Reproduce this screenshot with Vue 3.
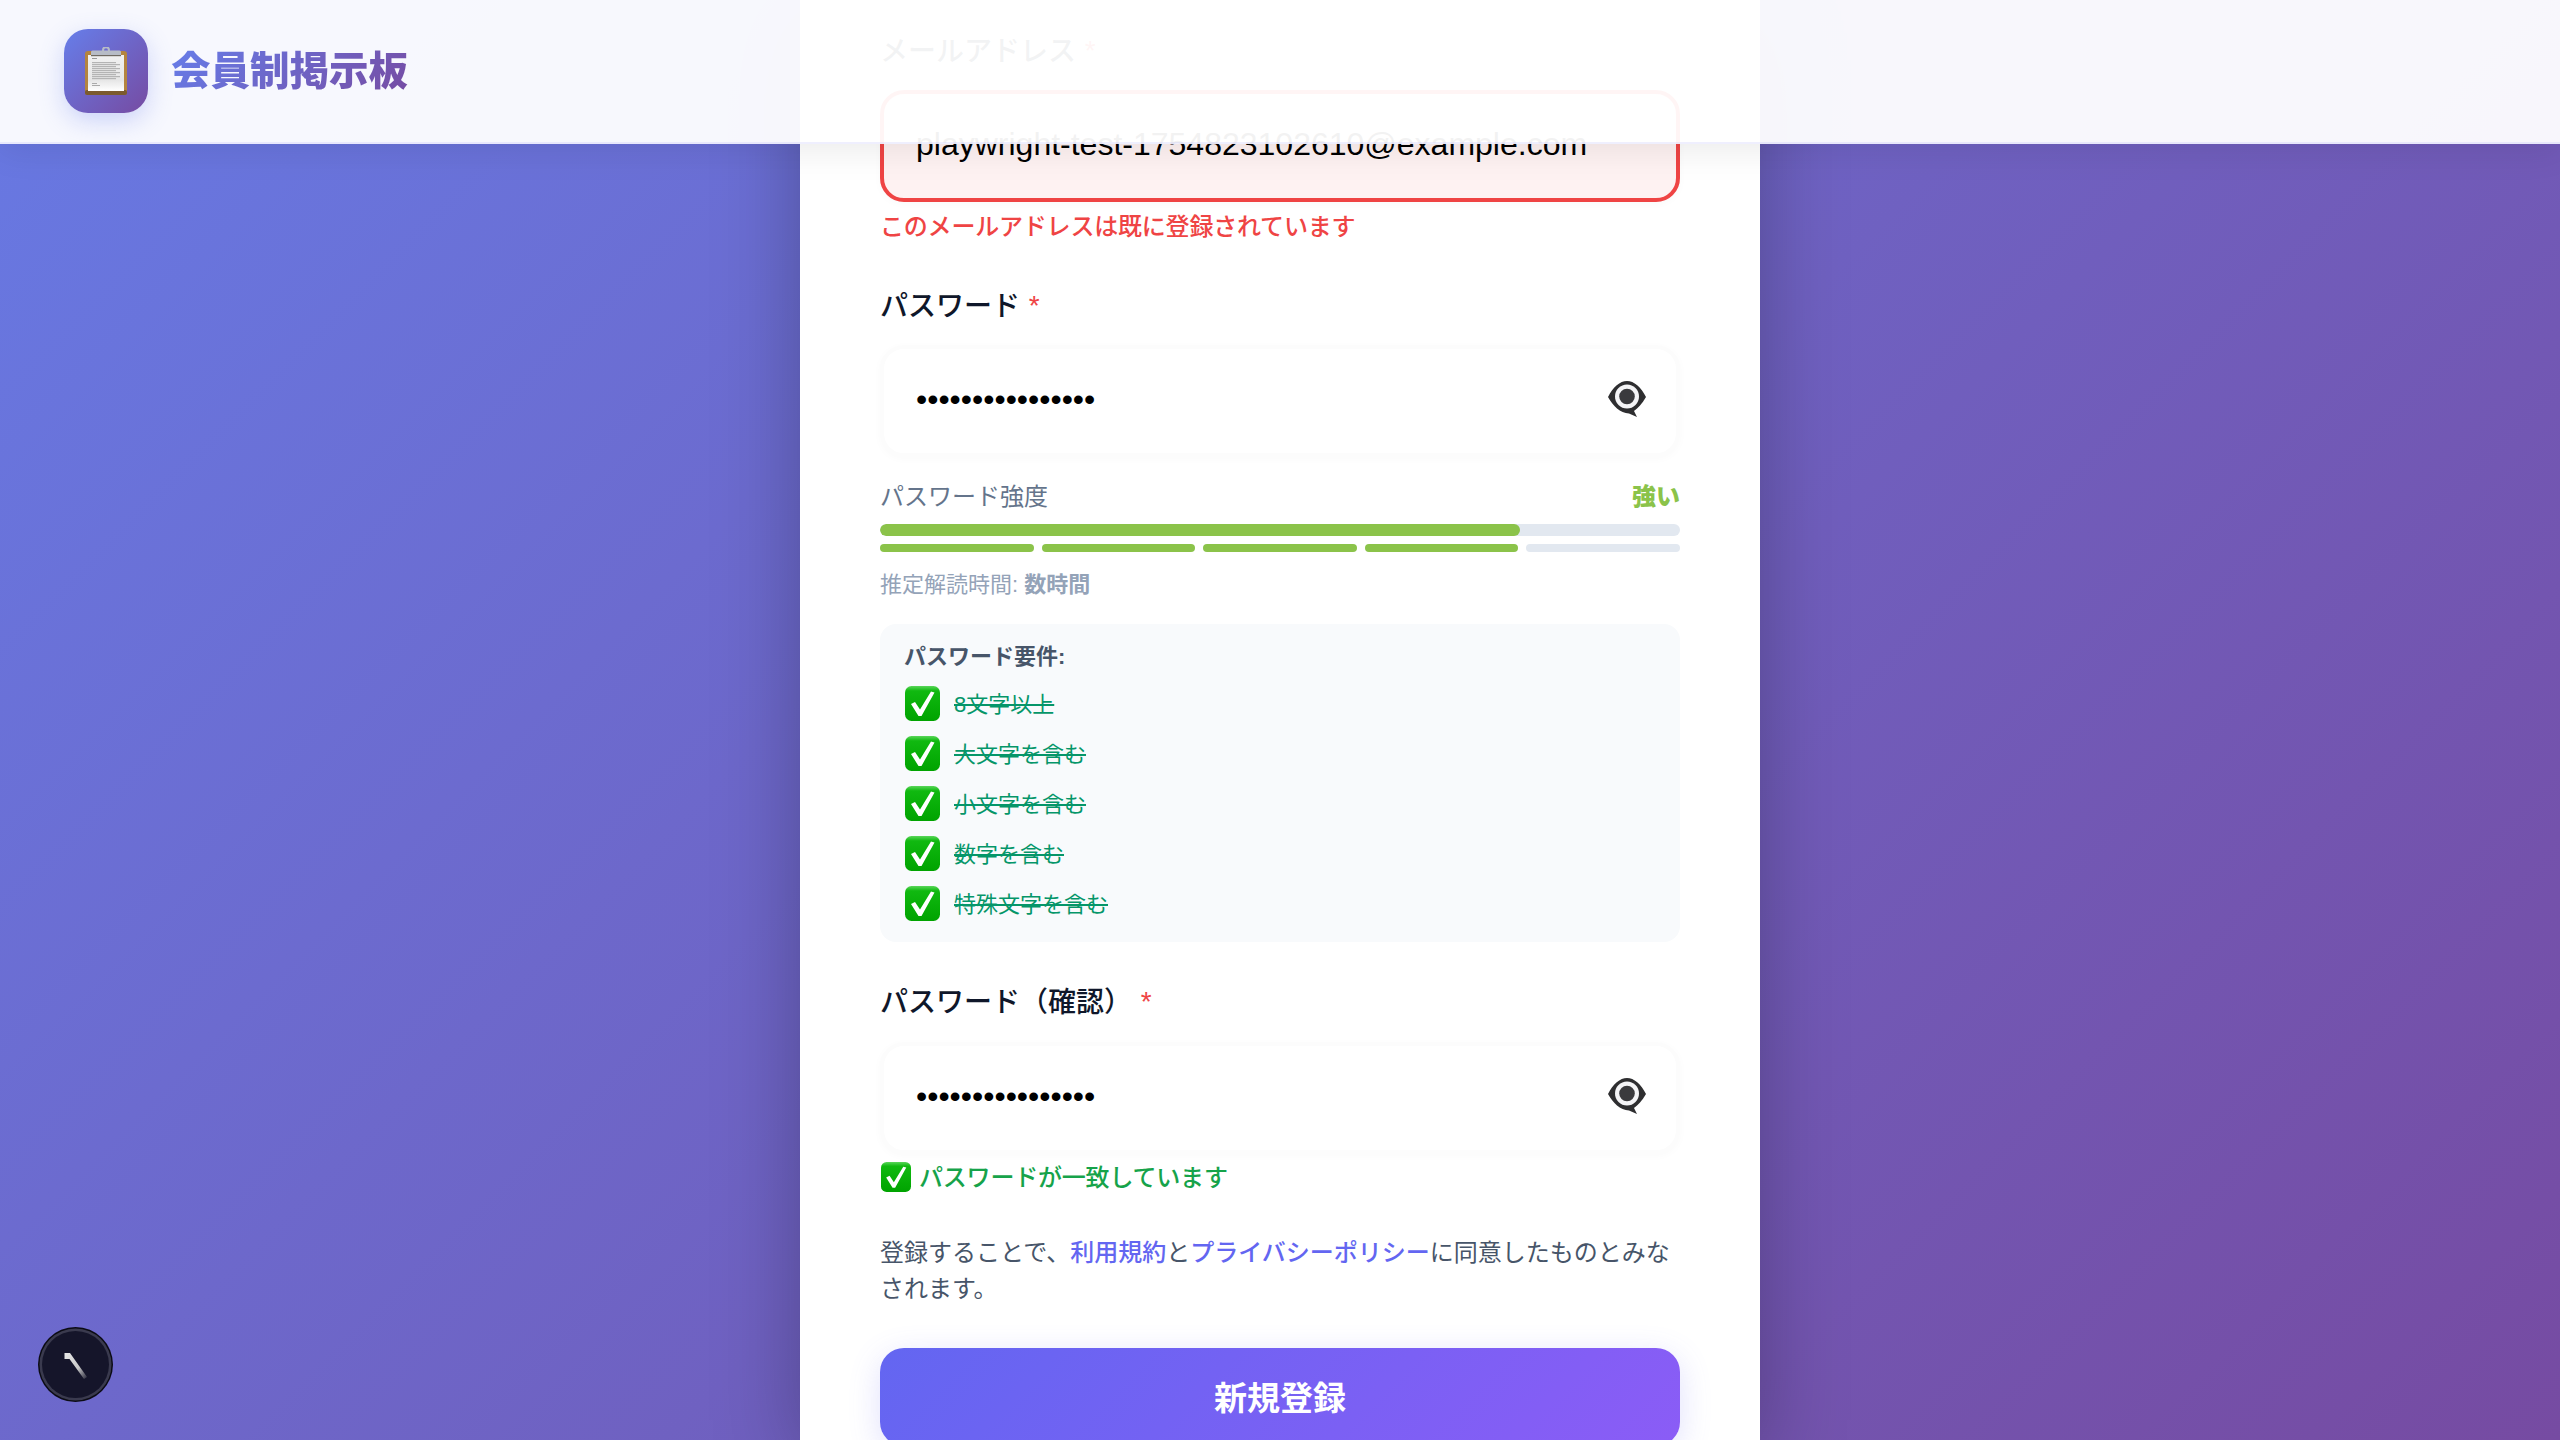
<script setup>
const requirements = ['8文字以上', '大文字を含む', '小文字を含む', '数字を含む', '特殊文字を含む']
const segments = [true, true, true, true, false]
const paperLines = [13, 15, 17, 19, 21, 23, 25, 27, 29]
</script>

<template>
  <div class="page">
    <header class="topbar">
      <div class="logo">
        <svg class="clip-icon" width="42" height="48" viewBox="0 0 42 48">
          <defs>
            <linearGradient id="paper" x1="0" y1="0" x2="0" y2="1">
              <stop offset="0" stop-color="#f1f1f1" />
              <stop offset="0.7" stop-color="#e6e6e6" />
              <stop offset="1" stop-color="#ffffff" />
            </linearGradient>
          </defs>
          <rect x="0" y="4" width="42" height="44" rx="3" fill="#b4843f" />
          <rect x="0" y="43" width="42" height="5" rx="2" fill="#7b5a2e" />
          <rect x="3" y="8" width="36" height="36" fill="url(#paper)" />
          <rect x="7" y="11" width="5" height="1" fill="#999" />
          <rect v-for="y in paperLines" :key="y" x="7" :y="y + 2" :width="y % 4 === 1 ? 24 : 28" height="1.2" fill="#b4b4b4" />
          <rect x="7" y="36" width="5" height="1" fill="#aaa" />
          <rect x="7" y="38" width="8" height="1" fill="#aaa" />
          <rect x="6" y="3.5" width="30" height="5.5" rx="1.5" fill="#b7bcc6" />
          <rect x="6" y="8" width="30" height="1.2" fill="#6f6a62" />
          <circle cx="21" cy="3.2" r="3" fill="none" stroke="#b7bcc6" stroke-width="2" />
        </svg>
      </div>
      <h1 class="brand">会員制掲示板</h1>
    </header>

    <main class="card">
      <section class="field">
        <label class="label">メールアドレス <span class="req">*</span></label>
        <input class="input input-error" type="email" value="playwright-test-1754823102610@example.com" readonly />
        <p class="error">このメールアドレスは既に登録されています</p>
      </section>

      <section class="field field-password">
        <label class="label">パスワード <span class="req">*</span></label>
        <div class="input-wrap">
          <input class="input" type="password" value="Playwright#Test1" readonly />
          <svg class="eye" width="40" height="38" viewBox="0 0 40 38">
            <path d="M1 17C6 7 13 1 20 1C27 1 34 7 39 17C35 24 31 28 27 31L30 37L22 33.5C13 33 6 26 1 17Z" fill="#2e2e30" />
            <circle cx="20" cy="16.5" r="12" fill="#f4f4f6" />
            <circle cx="20" cy="16.5" r="7.8" fill="#3a3a3d" />
          </svg>
        </div>

        <div class="strength-head">
          <span class="strength-title">パスワード強度</span>
          <span class="strength-value">強い</span>
        </div>
        <div class="bar"><div class="bar-fill" :style="{ width: '80%' }"></div></div>
        <div class="segments">
          <span v-for="(on, i) in segments" :key="i" class="segment" :class="{ on }"></span>
        </div>
        <p class="crack">推定解読時間: <strong>数時間</strong></p>

        <div class="reqs">
          <p class="reqs-title">パスワード要件:</p>
          <ul class="reqs-list">
            <li v-for="r in requirements" :key="r" class="reqs-item">
              <svg class="check" width="35" height="35" viewBox="0 0 35 35">
                <defs>
                  <linearGradient id="green" x1="0" y1="0" x2="0" y2="1">
                    <stop offset="0" stop-color="#5ad65a" />
                    <stop offset="0.14" stop-color="#10b910" />
                    <stop offset="1" stop-color="#00a300" />
                  </linearGradient>
                </defs>
                <rect width="35" height="35" rx="6.5" fill="url(#green)" />
                <path d="M6 18L10 16L15 23.5L26 5.5L29.5 6.5L16.5 30H13.5Z" fill="#fff" />
              </svg>
              <span class="reqs-text">{{ r }}</span>
            </li>
          </ul>
        </div>
      </section>

      <section class="field field-confirm">
        <label class="label">パスワード（確認） <span class="req">*</span></label>
        <div class="input-wrap">
          <input class="input" type="password" value="Playwright#Test1" readonly />
          <svg class="eye" width="40" height="38" viewBox="0 0 40 38">
            <path d="M1 17C6 7 13 1 20 1C27 1 34 7 39 17C35 24 31 28 27 31L30 37L22 33.5C13 33 6 26 1 17Z" fill="#2e2e30" />
            <circle cx="20" cy="16.5" r="12" fill="#f4f4f6" />
            <circle cx="20" cy="16.5" r="7.8" fill="#3a3a3d" />
          </svg>
        </div>
        <p class="match">
          <svg class="check" width="30" height="30" viewBox="0 0 35 35">
            <rect width="35" height="35" rx="6.5" fill="url(#green)" />
            <path d="M6 18L10 16L15 23.5L26 5.5L29.5 6.5L16.5 30H13.5Z" fill="#fff" />
          </svg>
          <span class="match-text">パスワードが一致しています</span>
        </p>
      </section>

      <p class="terms">
        登録することで、<a class="link">利用規約</a>と<a class="link">プライバシーポリシー</a>に同意したものとみなされます。
      </p>

      <button class="submit" type="button">新規登録</button>
    </main>

    <div class="dev-badge">
      <svg width="75" height="75" viewBox="0 0 75 75">
        <defs>
          <linearGradient id="stroke" x1="0" y1="0" x2="1" y2="1">
            <stop offset="0" stop-color="#e8e8e8" />
            <stop offset="0.6" stop-color="#c8c8c8" />
            <stop offset="1" stop-color="#c8c8c8" stop-opacity="0.1" />
          </linearGradient>
        </defs>
        <circle cx="37.5" cy="37.5" r="37.5" fill="#0b0b14" />
        <circle cx="37.5" cy="37.5" r="36" fill="#3a3a4e" />
        <circle cx="37.5" cy="37.5" r="33.5" fill="#15152a" />
        <path d="M26.5 26H32L49 50L46 52L31.5 32H26.5Z" fill="url(#stroke)" />
      </svg>
    </div>
  </div>
</template>

<style>
html,
body {
  margin: 0;
  overflow: hidden;
}
</style>

<style scoped>
.page {
  height: 1440px;
  overflow: hidden;
  background: linear-gradient(135deg, #667eea 0%, #764ba2 100%) bottom / 100% 1840px no-repeat;
  font-family: "Liberation Sans", "Noto Sans CJK JP", sans-serif;
  color: #0f172a;
}

.topbar {
  position: fixed;
  top: 0;
  left: 0;
  right: 0;
  z-index: 10;
  height: 144px;
  box-sizing: border-box;
  display: flex;
  align-items: center;
  gap: 23px;
  padding: 0 64px;
  background: rgba(255, 255, 255, 0.95);
  border-bottom: 2px solid rgba(99, 102, 241, 0.1);
  box-shadow: 0 8px 32px rgba(0, 0, 0, 0.08);
}

.logo {
  width: 84px;
  height: 84px;
  border-radius: 24px;
  background: linear-gradient(135deg, #667eea, #764ba2);
  box-shadow: 0 8px 24px rgba(102, 126, 234, 0.3);
  display: flex;
  align-items: center;
  justify-content: center;
}

.brand {
  margin: 0;
  font-size: 39.5px;
  line-height: 56px;
  font-weight: 900;
  background: linear-gradient(135deg, #667eea, #764ba2);
  -webkit-background-clip: text;
  background-clip: text;
  color: transparent;
}

.card {
  width: 960px;
  height: 1440px;
  box-sizing: border-box;
  margin: 0 auto;
  padding: 32px 80px 0;
  background: #fff;
  box-shadow: 0 20px 80px rgba(0, 0, 0, 0.28);
}

.field-password {
  margin-top: 43px;
}

.field-confirm {
  margin-top: 41px;
}

.label {
  display: block;
  font-size: 28px;
  line-height: 40px;
  font-weight: 500;
  margin-bottom: 18px;
  color: #0f172a;
}

.field-confirm .label {
  margin-bottom: 19px;
}

.req {
  position: relative;
  top: -1px;
  color: #ef4444;
  margin-left: 1px;
}

.input-wrap {
  position: relative;
}

.input {
  display: block;
  width: 100%;
  height: 112px;
  box-sizing: border-box;
  padding: 0 32px 4px;
  border: 4px solid #fcfcfc;
  border-radius: 24px;
  background: #fff;
  font-family: "Liberation Sans", sans-serif;
  font-size: 32px;
  color: #000;
  outline: none;
  box-shadow: 0 2px 8px rgba(0, 0, 0, 0.025);
}

.input-error {
  border-color: #ef4444;
  background: #fef2f2;
}

.eye {
  position: absolute;
  right: 33px;
  top: 35px;
}

.error {
  margin: 8px 0 0;
  font-size: 24px;
  line-height: 34px;
  letter-spacing: -0.2px;
  font-weight: 500;
  color: #ef4444;
}

.strength-head {
  display: flex;
  justify-content: space-between;
  margin-top: 22px;
  font-size: 24px;
  line-height: 36px;
}

.strength-title {
  color: #64748b;
}

.strength-value {
  color: #8bc34a;
  font-weight: 900;
}

.bar {
  height: 12px;
  margin-top: 9px;
  border-radius: 6px;
  background: #e2e8f0;
  overflow: hidden;
}

.bar-fill {
  height: 100%;
  border-radius: 6px;
  background: #8bc34a;
}

.segments {
  display: grid;
  grid-template-columns: repeat(5, 1fr);
  gap: 8px;
  margin-top: 8px;
}

.segment {
  height: 8px;
  border-radius: 4px;
  background: #e2e8f0;
}

.segment.on {
  background: #8bc34a;
}

.crack {
  margin: 17px 0 0;
  font-size: 22px;
  line-height: 32px;
  color: #94a3b8;
}

.crack strong {
  font-weight: 700;
}

.reqs {
  height: 318px;
  box-sizing: border-box;
  margin-top: 23px;
  padding: 18px 24px 0;
  border-radius: 16px;
  background: #f8fafc;
}

.reqs-title {
  margin: 0 0 14px;
  font-size: 22px;
  line-height: 30px;
  font-weight: 700;
  color: #475569;
}

.reqs-list {
  list-style: none;
  margin: 0;
  padding: 0;
  display: flex;
  flex-direction: column;
  gap: 15px;
}

.reqs-item {
  display: flex;
  align-items: center;
  gap: 14px;
  height: 35px;
  padding-left: 1px;
}

.reqs-text {
  position: relative;
  top: 1.5px;
  font-size: 22px;
  line-height: 32px;
  color: #059669;
  text-decoration: line-through;
}

.check {
  flex: none;
}

.match {
  display: flex;
  align-items: center;
  gap: 8px;
  height: 30px;
  margin: 8px 0 0;
  padding-left: 1px;
  font-size: 24px;
  letter-spacing: -0.2px;
  font-weight: 500;
  color: #16a34a;
}

.match-text {
  position: relative;
  top: -2px;
}

.terms {
  margin: 43px 0 0;
  font-size: 24px;
  line-height: 36px;
  color: #475569;
}

.link {
  color: #6366f1;
  font-weight: 500;
}

.submit {
  display: block;
  width: 100%;
  height: 98px;
  margin-top: 41px;
  padding: 0 0 3px;
  border: none;
  border-radius: 24px;
  background: linear-gradient(135deg, #6366f1, #8b5cf6);
  color: #fff;
  font-family: inherit;
  font-size: 33px;
  font-weight: 700;
  box-shadow: 0 8px 32px rgba(99, 102, 241, 0.2);
}

.dev-badge {
  position: fixed;
  left: 38px;
  bottom: 38px;
  width: 75px;
  height: 75px;
  z-index: 20;
}

.dev-badge svg {
  display: block;
}
</style>
